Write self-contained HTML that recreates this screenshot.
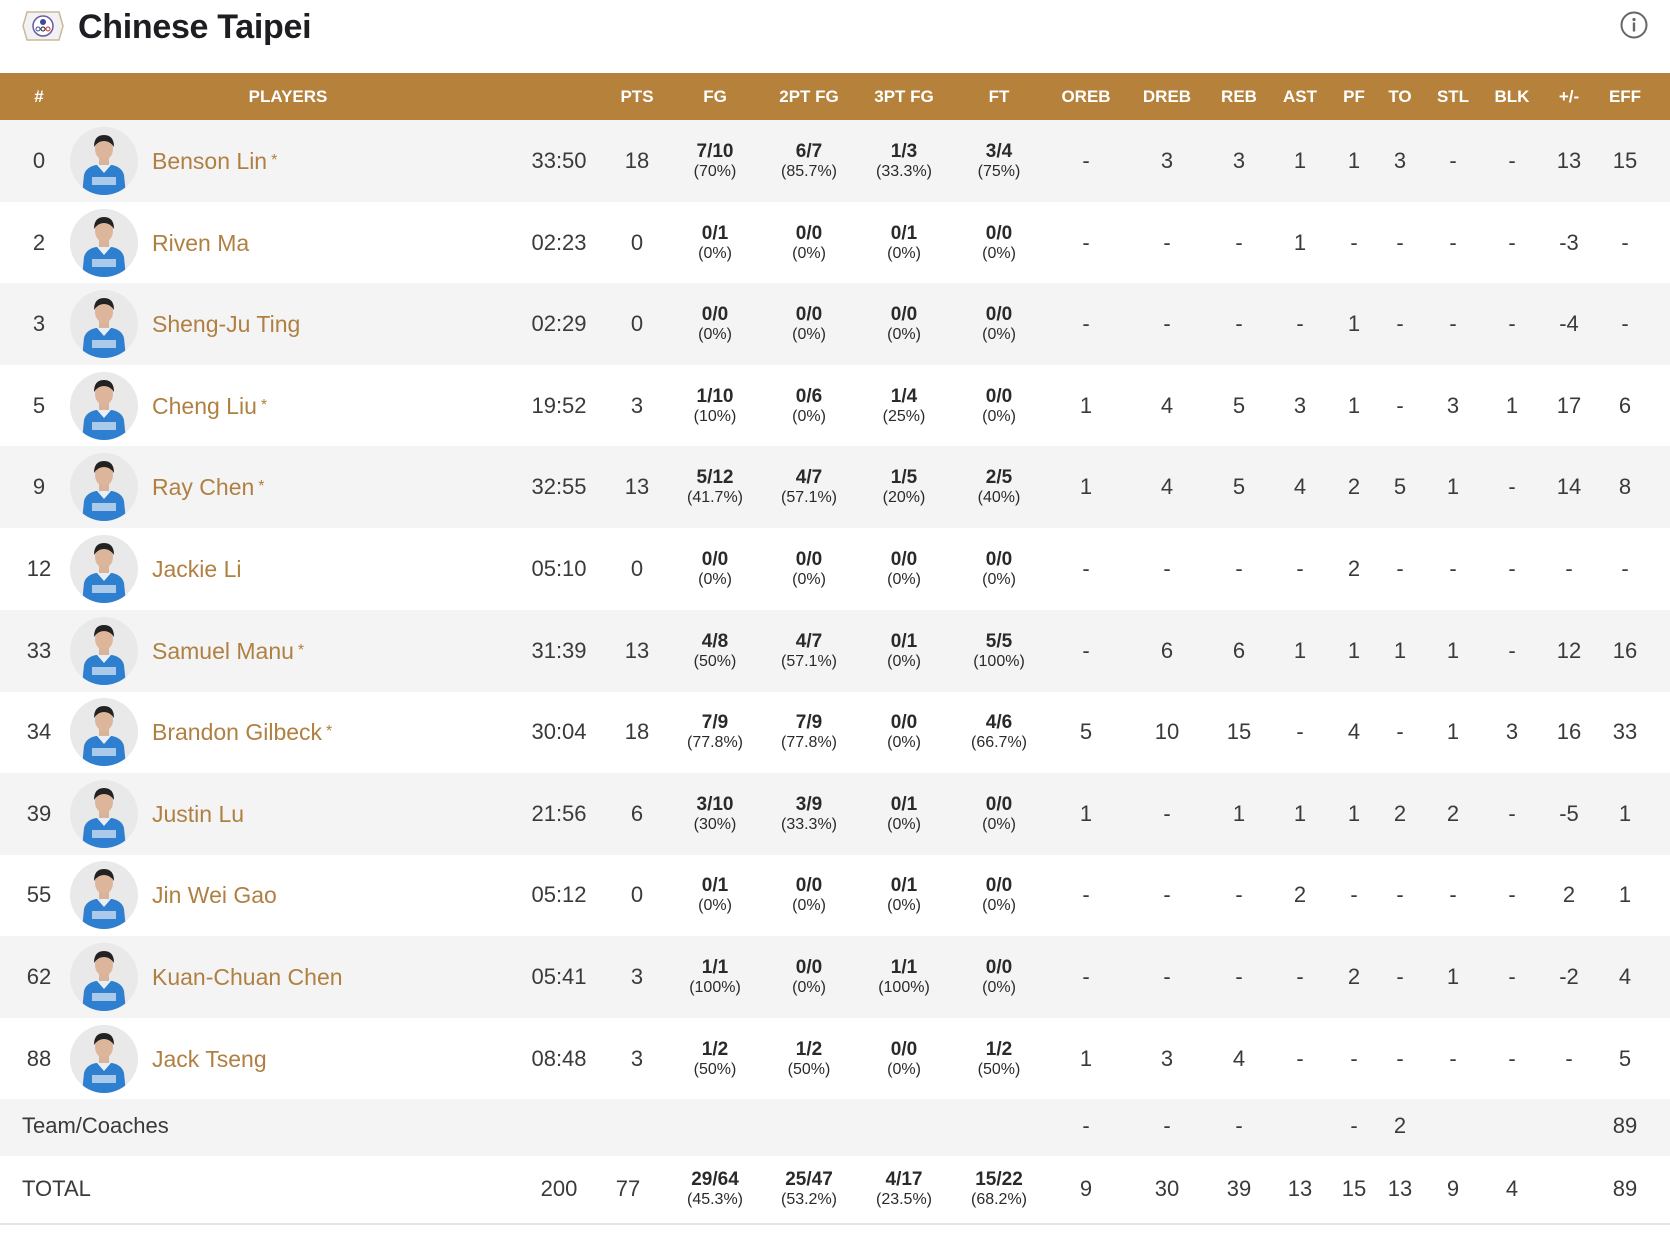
<!DOCTYPE html>
<html><head><meta charset="utf-8"><style>
*{margin:0;padding:0;box-sizing:border-box}
body{width:1670px;height:1242px;background:#fff;font-family:"Liberation Sans",sans-serif;color:#3a3a3a;position:relative;overflow:hidden}
.title{position:absolute;left:78px;top:8px;font-size:34px;font-weight:bold;color:#1d1d22;letter-spacing:-0.3px}
.hd{position:absolute;left:0;top:73px;width:1670px;height:47px;background:#b5813b;color:#fff;font-weight:bold;font-size:17px}
.hd span{position:absolute;top:14px;text-align:center}
.row{position:absolute;left:0;width:1670px;height:82px}
.g{background:#f4f4f4}
.row span,.row div.c{position:absolute;text-align:center;font-size:22px;top:28px}
.row div.c{top:22px;line-height:20px}
.row div.c b{display:block;font-size:19px;color:#2a2a2a}
.row div.c i{display:block;font-style:normal;font-size:16px;color:#2a2a2a}
.nm{left:152px !important;text-align:left !important;color:#b08043;font-size:23px !important}
.nm sup{font-size:16px;vertical-align:4px;margin-left:4px}
.av{position:absolute;left:70px;top:7px;width:68px;height:68px}
.a0{left:14px;width:50px}.a1{left:519px;width:80px}.a2{left:612px;width:50px}
.a3{left:675px;width:80px}.a4{left:769px;width:80px}.a5{left:864px;width:80px}.a6{left:959px;width:80px}
.a7{left:1056px;width:60px}.a8{left:1137px;width:60px}.a9{left:1209px;width:60px}.a10{left:1275px;width:50px}
.a11{left:1329px;width:50px}.a12{left:1375px;width:50px}.a13{left:1428px;width:50px}.a14{left:1487px;width:50px}
.a15{left:1544px;width:50px}.a16{left:1600px;width:50px}
</style></head><body>
<svg width="0" height="0" style="position:absolute"><defs>
<symbol id="av" viewBox="0 0 68 68">
<circle cx="34" cy="34" r="34" fill="#e9e9ea"/>
<clipPath id="cc"><circle cx="34" cy="34" r="34"/></clipPath>
<g clip-path="url(#cc)">
<rect x="29" y="30" width="10" height="10" fill="#d9b49a"/>
<path d="M12 68 L14 48 Q16 40 26 38 L42 38 Q52 40 54 48 L56 68Z" fill="#2f7fd0"/>
<path d="M27 38 L34 46 L41 38Z" fill="#e9eef5"/>
<rect x="22" y="50" width="24" height="8" fill="#dfe9f5" opacity=".7"/>
<ellipse cx="34" cy="22" rx="9" ry="11" fill="#dcb59b"/>
<path d="M24 20 Q24 8 34 8 Q44 8 44 20 Q40 14 34 14 Q28 14 24 20Z" fill="#222"/>
</g></symbol></defs></svg>

<svg style="position:absolute;left:21px;top:9px" width="44" height="34" viewBox="0 0 44 34">
<path d="M6 3 L38 3 L42 17 L38 31 L6 31 L2 17Z" fill="#f2f2f4" stroke="#c9b89a" stroke-width="1.5"/>
<circle cx="22" cy="17" r="10" fill="#fff" stroke="#6a5aa0" stroke-width="1.5"/>
<circle cx="22" cy="13" r="3" fill="#3b4aa0"/>
<circle cx="17" cy="20" r="2" fill="none" stroke="#3b4aa0"/><circle cx="22" cy="20" r="2" fill="none" stroke="#222"/><circle cx="27" cy="20" r="2" fill="none" stroke="#c33"/>
</svg>
<div class="title">Chinese Taipei</div>
<svg style="position:absolute;left:1620px;top:11px" width="28" height="28" viewBox="0 0 28 28"><circle cx="14" cy="14" r="12.5" fill="none" stroke="#666" stroke-width="2"/><circle cx="14" cy="8.5" r="1.6" fill="#666"/><rect x="12.8" y="11.5" width="2.4" height="9" fill="#666"/></svg>

<div class="hd">
<span style="left:14px;width:50px">#</span>
<span style="left:238px;width:100px">PLAYERS</span>
<span style="left:612px;width:50px">PTS</span>
<span style="left:675px;width:80px">FG</span>
<span style="left:769px;width:80px">2PT FG</span>
<span style="left:864px;width:80px">3PT FG</span>
<span style="left:959px;width:80px">FT</span>
<span style="left:1050px;width:72px">OREB</span>
<span style="left:1131px;width:72px">DREB</span>
<span style="left:1209px;width:60px">REB</span>
<span style="left:1275px;width:50px">AST</span>
<span style="left:1329px;width:50px">PF</span>
<span style="left:1375px;width:50px">TO</span>
<span style="left:1428px;width:50px">STL</span>
<span style="left:1487px;width:50px">BLK</span>
<span style="left:1544px;width:50px">+/-</span>
<span style="left:1600px;width:50px">EFF</span>
</div>

<div class="row g" style="top:120px"><span class="a0">0</span><svg class="av"><use href="#av"/></svg><span class="nm">Benson Lin<sup>*</sup></span><span class="a1">33:50</span><span class="a2">18</span><div class="c a3"><b>7/10</b><i>(70%)</i></div><div class="c a4"><b>6/7</b><i>(85.7%)</i></div><div class="c a5"><b>1/3</b><i>(33.3%)</i></div><div class="c a6"><b>3/4</b><i>(75%)</i></div><span class="a7">-</span><span class="a8">3</span><span class="a9">3</span><span class="a10">1</span><span class="a11">1</span><span class="a12">3</span><span class="a13">-</span><span class="a14">-</span><span class="a15">13</span><span class="a16">15</span></div>

<div class="row" style="top:201.6px"><span class="a0">2</span><svg class="av"><use href="#av"/></svg><span class="nm">Riven Ma</span><span class="a1">02:23</span><span class="a2">0</span><div class="c a3"><b>0/1</b><i>(0%)</i></div><div class="c a4"><b>0/0</b><i>(0%)</i></div><div class="c a5"><b>0/1</b><i>(0%)</i></div><div class="c a6"><b>0/0</b><i>(0%)</i></div><span class="a7">-</span><span class="a8">-</span><span class="a9">-</span><span class="a10">1</span><span class="a11">-</span><span class="a12">-</span><span class="a13">-</span><span class="a14">-</span><span class="a15">-3</span><span class="a16">-</span></div>

<div class="row g" style="top:283.2px"><span class="a0">3</span><svg class="av"><use href="#av"/></svg><span class="nm">Sheng-Ju Ting</span><span class="a1">02:29</span><span class="a2">0</span><div class="c a3"><b>0/0</b><i>(0%)</i></div><div class="c a4"><b>0/0</b><i>(0%)</i></div><div class="c a5"><b>0/0</b><i>(0%)</i></div><div class="c a6"><b>0/0</b><i>(0%)</i></div><span class="a7">-</span><span class="a8">-</span><span class="a9">-</span><span class="a10">-</span><span class="a11">1</span><span class="a12">-</span><span class="a13">-</span><span class="a14">-</span><span class="a15">-4</span><span class="a16">-</span></div>

<div class="row" style="top:364.8px"><span class="a0">5</span><svg class="av"><use href="#av"/></svg><span class="nm">Cheng Liu<sup>*</sup></span><span class="a1">19:52</span><span class="a2">3</span><div class="c a3"><b>1/10</b><i>(10%)</i></div><div class="c a4"><b>0/6</b><i>(0%)</i></div><div class="c a5"><b>1/4</b><i>(25%)</i></div><div class="c a6"><b>0/0</b><i>(0%)</i></div><span class="a7">1</span><span class="a8">4</span><span class="a9">5</span><span class="a10">3</span><span class="a11">1</span><span class="a12">-</span><span class="a13">3</span><span class="a14">1</span><span class="a15">17</span><span class="a16">6</span></div>

<div class="row g" style="top:446.4px"><span class="a0">9</span><svg class="av"><use href="#av"/></svg><span class="nm">Ray Chen<sup>*</sup></span><span class="a1">32:55</span><span class="a2">13</span><div class="c a3"><b>5/12</b><i>(41.7%)</i></div><div class="c a4"><b>4/7</b><i>(57.1%)</i></div><div class="c a5"><b>1/5</b><i>(20%)</i></div><div class="c a6"><b>2/5</b><i>(40%)</i></div><span class="a7">1</span><span class="a8">4</span><span class="a9">5</span><span class="a10">4</span><span class="a11">2</span><span class="a12">5</span><span class="a13">1</span><span class="a14">-</span><span class="a15">14</span><span class="a16">8</span></div>

<div class="row" style="top:528px"><span class="a0">12</span><svg class="av"><use href="#av"/></svg><span class="nm">Jackie Li</span><span class="a1">05:10</span><span class="a2">0</span><div class="c a3"><b>0/0</b><i>(0%)</i></div><div class="c a4"><b>0/0</b><i>(0%)</i></div><div class="c a5"><b>0/0</b><i>(0%)</i></div><div class="c a6"><b>0/0</b><i>(0%)</i></div><span class="a7">-</span><span class="a8">-</span><span class="a9">-</span><span class="a10">-</span><span class="a11">2</span><span class="a12">-</span><span class="a13">-</span><span class="a14">-</span><span class="a15">-</span><span class="a16">-</span></div>

<div class="row g" style="top:609.6px"><span class="a0">33</span><svg class="av"><use href="#av"/></svg><span class="nm">Samuel Manu<sup>*</sup></span><span class="a1">31:39</span><span class="a2">13</span><div class="c a3"><b>4/8</b><i>(50%)</i></div><div class="c a4"><b>4/7</b><i>(57.1%)</i></div><div class="c a5"><b>0/1</b><i>(0%)</i></div><div class="c a6"><b>5/5</b><i>(100%)</i></div><span class="a7">-</span><span class="a8">6</span><span class="a9">6</span><span class="a10">1</span><span class="a11">1</span><span class="a12">1</span><span class="a13">1</span><span class="a14">-</span><span class="a15">12</span><span class="a16">16</span></div>

<div class="row" style="top:691.2px"><span class="a0">34</span><svg class="av"><use href="#av"/></svg><span class="nm">Brandon Gilbeck<sup>*</sup></span><span class="a1">30:04</span><span class="a2">18</span><div class="c a3"><b>7/9</b><i>(77.8%)</i></div><div class="c a4"><b>7/9</b><i>(77.8%)</i></div><div class="c a5"><b>0/0</b><i>(0%)</i></div><div class="c a6"><b>4/6</b><i>(66.7%)</i></div><span class="a7">5</span><span class="a8">10</span><span class="a9">15</span><span class="a10">-</span><span class="a11">4</span><span class="a12">-</span><span class="a13">1</span><span class="a14">3</span><span class="a15">16</span><span class="a16">33</span></div>

<div class="row g" style="top:772.8px"><span class="a0">39</span><svg class="av"><use href="#av"/></svg><span class="nm">Justin Lu</span><span class="a1">21:56</span><span class="a2">6</span><div class="c a3"><b>3/10</b><i>(30%)</i></div><div class="c a4"><b>3/9</b><i>(33.3%)</i></div><div class="c a5"><b>0/1</b><i>(0%)</i></div><div class="c a6"><b>0/0</b><i>(0%)</i></div><span class="a7">1</span><span class="a8">-</span><span class="a9">1</span><span class="a10">1</span><span class="a11">1</span><span class="a12">2</span><span class="a13">2</span><span class="a14">-</span><span class="a15">-5</span><span class="a16">1</span></div>

<div class="row" style="top:854.4px"><span class="a0">55</span><svg class="av"><use href="#av"/></svg><span class="nm">Jin Wei Gao</span><span class="a1">05:12</span><span class="a2">0</span><div class="c a3"><b>0/1</b><i>(0%)</i></div><div class="c a4"><b>0/0</b><i>(0%)</i></div><div class="c a5"><b>0/1</b><i>(0%)</i></div><div class="c a6"><b>0/0</b><i>(0%)</i></div><span class="a7">-</span><span class="a8">-</span><span class="a9">-</span><span class="a10">2</span><span class="a11">-</span><span class="a12">-</span><span class="a13">-</span><span class="a14">-</span><span class="a15">2</span><span class="a16">1</span></div>

<div class="row g" style="top:936px"><span class="a0">62</span><svg class="av"><use href="#av"/></svg><span class="nm">Kuan-Chuan Chen</span><span class="a1">05:41</span><span class="a2">3</span><div class="c a3"><b>1/1</b><i>(100%)</i></div><div class="c a4"><b>0/0</b><i>(0%)</i></div><div class="c a5"><b>1/1</b><i>(100%)</i></div><div class="c a6"><b>0/0</b><i>(0%)</i></div><span class="a7">-</span><span class="a8">-</span><span class="a9">-</span><span class="a10">-</span><span class="a11">2</span><span class="a12">-</span><span class="a13">1</span><span class="a14">-</span><span class="a15">-2</span><span class="a16">4</span></div>

<div class="row" style="top:1017.6px"><span class="a0">88</span><svg class="av"><use href="#av"/></svg><span class="nm">Jack Tseng</span><span class="a1">08:48</span><span class="a2">3</span><div class="c a3"><b>1/2</b><i>(50%)</i></div><div class="c a4"><b>1/2</b><i>(50%)</i></div><div class="c a5"><b>0/0</b><i>(0%)</i></div><div class="c a6"><b>1/2</b><i>(50%)</i></div><span class="a7">1</span><span class="a8">3</span><span class="a9">4</span><span class="a10">-</span><span class="a11">-</span><span class="a12">-</span><span class="a13">-</span><span class="a14">-</span><span class="a15">-</span><span class="a16">5</span></div>

<div class="row g" style="top:1099px;height:57px"><span style="left:22px;top:14px;text-align:left">Team/Coaches</span><span class="a7" style="top:14px">-</span><span class="a8" style="top:14px">-</span><span class="a9" style="top:14px">-</span><span class="a11" style="top:14px">-</span><span class="a12" style="top:14px">2</span><span class="a16" style="top:14px">89</span></div>

<div class="row" style="top:1156px;height:69px;border-bottom:2px solid #e4e4e4"><span style="left:22px;top:20px;text-align:left">TOTAL</span><span class="a1" style="top:20px">200</span><span style="left:603px;width:50px;top:20px">77</span><div class="c a3" style="top:14px"><b>29/64</b><i>(45.3%)</i></div><div class="c a4" style="top:14px"><b>25/47</b><i>(53.2%)</i></div><div class="c a5" style="top:14px"><b>4/17</b><i>(23.5%)</i></div><div class="c a6" style="top:14px"><b>15/22</b><i>(68.2%)</i></div><span class="a7" style="top:20px">9</span><span class="a8" style="top:20px">30</span><span class="a9" style="top:20px">39</span><span class="a10" style="top:20px">13</span><span class="a11" style="top:20px">15</span><span class="a12" style="top:20px">13</span><span class="a13" style="top:20px">9</span><span class="a14" style="top:20px">4</span><span class="a16" style="top:20px">89</span></div>
</body></html>
